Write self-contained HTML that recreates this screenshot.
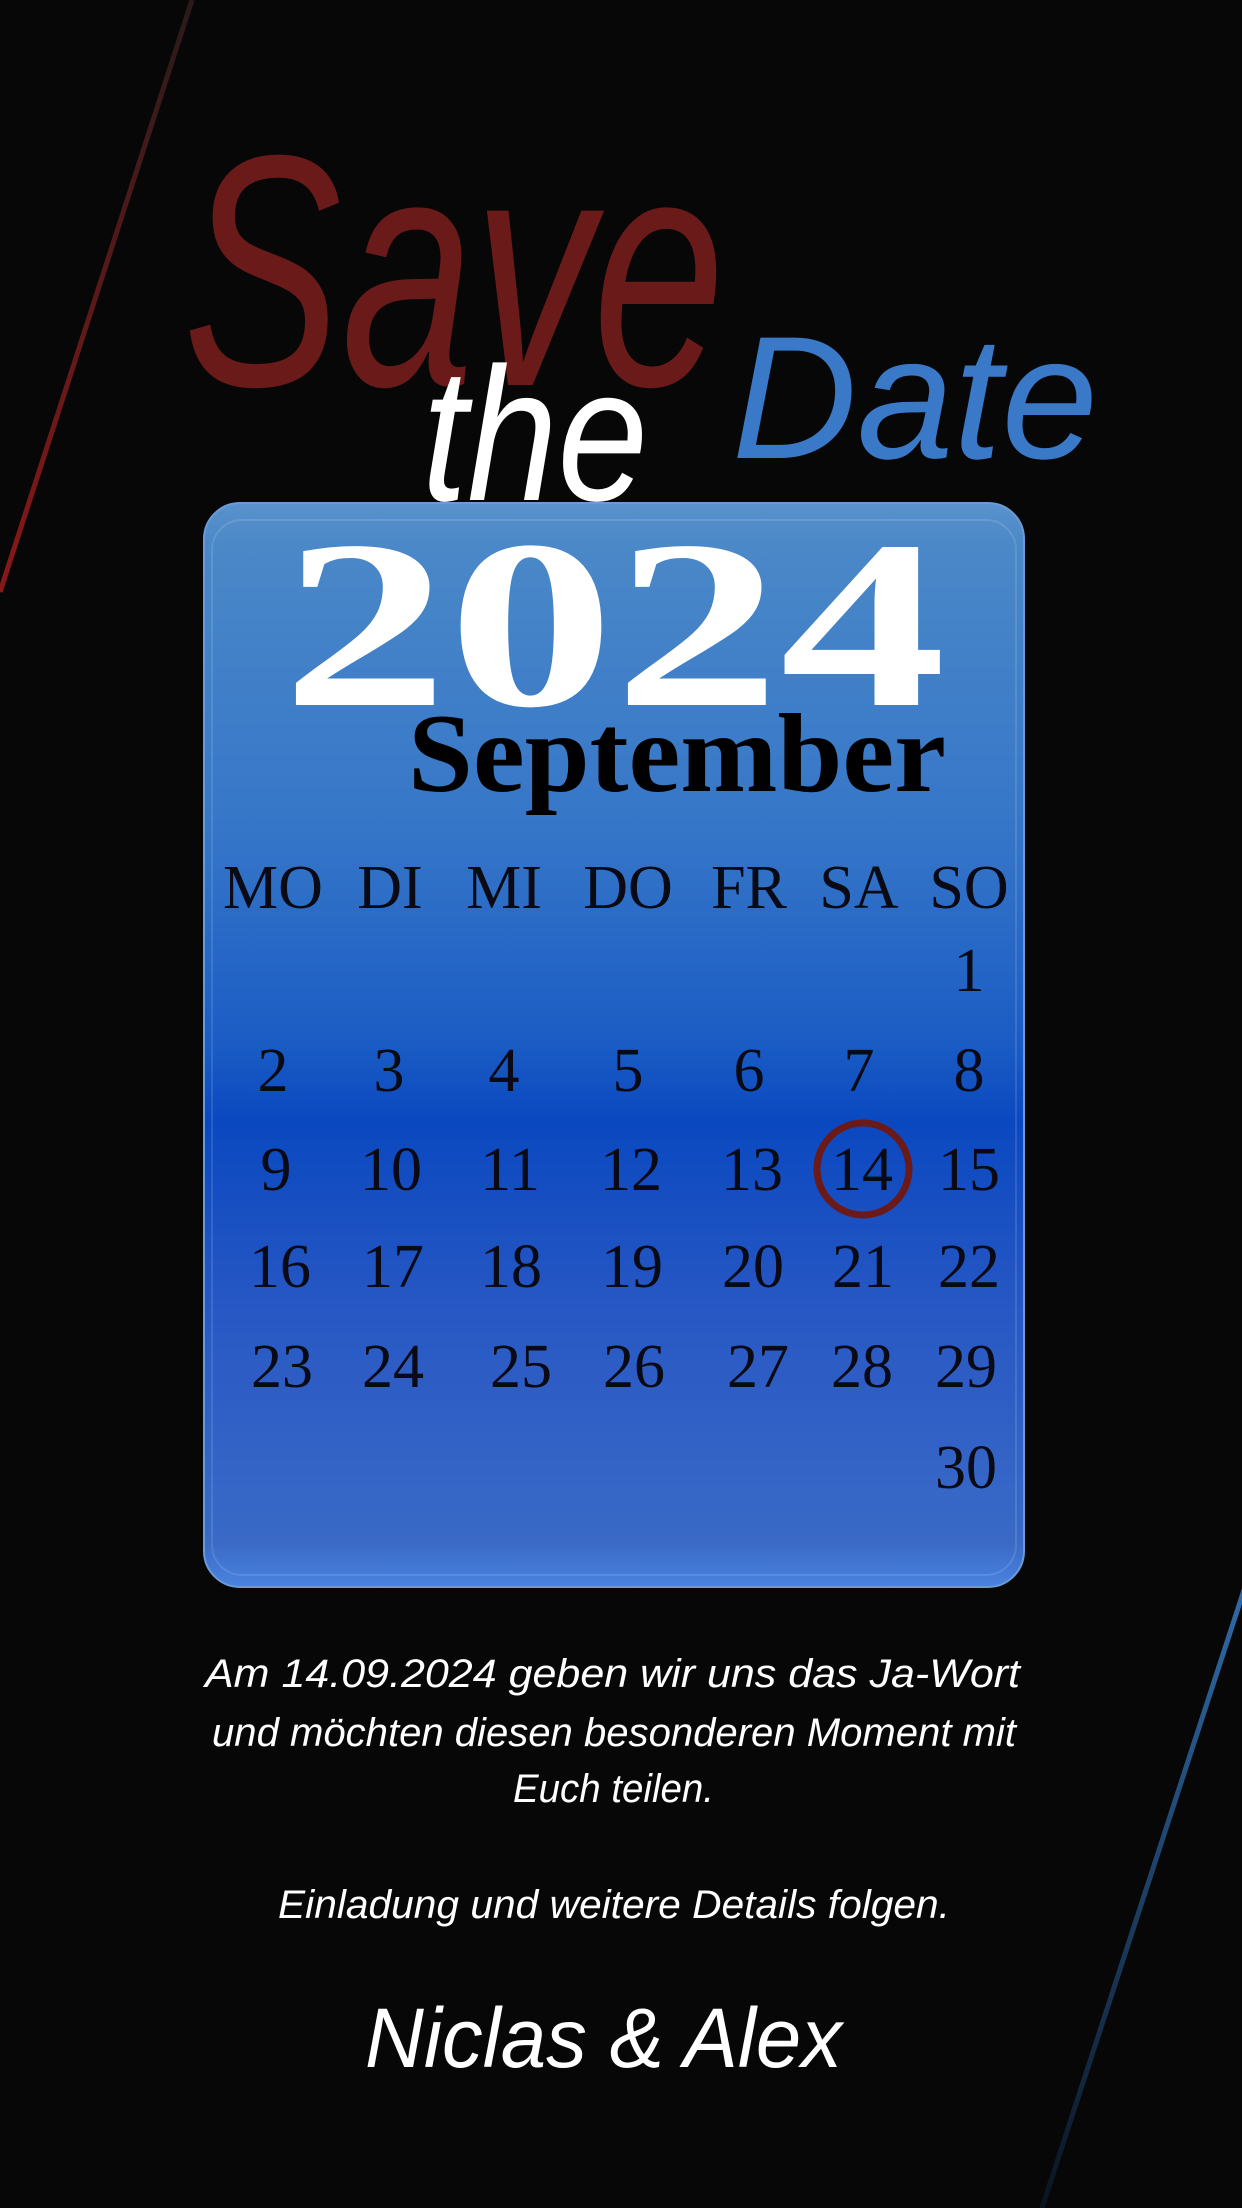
<!DOCTYPE html>
<html><head><meta charset="utf-8"><style>
html,body{margin:0;padding:0;background:#070707;}
svg{display:block}
</style></head><body>
<svg width="1242" height="2208" viewBox="0 0 1242 2208" xmlns="http://www.w3.org/2000/svg">
<defs>
<linearGradient id="red" x1="0" y1="0" x2="0" y2="1"><stop offset="0" stop-color="#2a1a1a"/><stop offset="1" stop-color="#8a1818"/></linearGradient>
<linearGradient id="blu" x1="0" y1="0" x2="0" y2="1"><stop offset="0" stop-color="#2f6aa8"/><stop offset="1" stop-color="#0a1420"/></linearGradient>
<linearGradient id="card" x1="0" y1="0" x2="0" y2="1">
<stop offset="0" stop-color="#5a92cc"/><stop offset="0.04" stop-color="#4a88c8"/>
<stop offset="0.3" stop-color="#3676c8"/><stop offset="0.5" stop-color="#1a5cc4"/>
<stop offset="0.57" stop-color="#0a48c0"/><stop offset="0.75" stop-color="#2858c4"/>
<stop offset="0.96" stop-color="#3a6ac6"/><stop offset="1" stop-color="#4a84e0"/></linearGradient>
</defs>
<rect width="1242" height="2208" fill="#070707"/>
<line x1="192" y1="0" x2="0" y2="592" stroke="url(#red)" stroke-width="5"/>
<line x1="1244" y1="1590" x2="1042" y2="2208" stroke="url(#blu)" stroke-width="5"/>

<rect x="204" y="503" width="820" height="1084" rx="36" fill="url(#card)" stroke="#6a9ad8" stroke-width="2"/>
<rect x="212" y="520" width="804" height="1055" rx="30" fill="none" stroke="rgba(255,255,255,0.12)" stroke-width="2"/>

<g font-family="Liberation Sans, sans-serif" font-style="italic">
<text x="183" y="385" font-size="330" fill="#6b1a1a" textLength="542" lengthAdjust="spacingAndGlyphs">Save</text>
<text x="732" y="458" font-size="175" fill="#3a78c8" textLength="366" lengthAdjust="spacingAndGlyphs">Date</text>
<text x="422" y="500" font-size="190" fill="#ffffff" textLength="226" lengthAdjust="spacingAndGlyphs">the</text>
</g>

<g font-family="Liberation Serif, serif" font-weight="bold">
<text x="282" y="705" font-size="240" fill="#fff" textLength="664" lengthAdjust="spacingAndGlyphs">2024</text>
<text x="408" y="791" font-size="112" fill="#000" textLength="538" lengthAdjust="spacingAndGlyphs">September</text>
</g>

<g font-family="Liberation Serif, serif" font-size="62" fill="#0a0a14" text-anchor="middle">
<text x="273" y="908">MO</text><text x="390" y="908">DI</text><text x="504" y="908">MI</text><text x="628" y="908">DO</text><text x="749" y="908">FR</text><text x="859" y="908">SA</text><text x="969" y="908">SO</text>
<text x="969" y="991">1</text>
<text x="273" y="1091">2</text><text x="389" y="1091">3</text><text x="504" y="1091">4</text><text x="628" y="1091">5</text><text x="749" y="1091">6</text><text x="859" y="1091">7</text><text x="969" y="1091">8</text>
<text x="276" y="1190">9</text><text x="391" y="1190">10</text><text x="510" y="1190">11</text><text x="631" y="1190">12</text><text x="752" y="1190">13</text><text x="862" y="1190">14</text><text x="969" y="1190">15</text>
<text x="280" y="1287">16</text><text x="393" y="1287">17</text><text x="511" y="1287">18</text><text x="632" y="1287">19</text><text x="753" y="1287">20</text><text x="863" y="1287">21</text><text x="969" y="1287">22</text>
<text x="282" y="1387">23</text><text x="393" y="1387">24</text><text x="521" y="1387">25</text><text x="634" y="1387">26</text><text x="758" y="1387">27</text><text x="862" y="1387">28</text><text x="966" y="1387">29</text>
<text x="966" y="1488">30</text>
</g>
<circle cx="863" cy="1169" r="46" fill="none" stroke="#6b1a1a" stroke-width="7"/>

<g font-family="Liberation Sans, sans-serif" font-style="italic" fill="#fff">
<text x="205" y="1687" font-size="40" textLength="815" lengthAdjust="spacingAndGlyphs">Am 14.09.2024 geben wir uns das Ja-Wort</text>
<text x="212" y="1746" font-size="40" textLength="804" lengthAdjust="spacingAndGlyphs">und möchten diesen besonderen Moment mit</text>
<text x="513" y="1802" font-size="40" textLength="201" lengthAdjust="spacingAndGlyphs">Euch teilen.</text>
<text x="278" y="1918" font-size="40" textLength="672" lengthAdjust="spacingAndGlyphs">Einladung und weitere Details folgen.</text>
<text x="365" y="2067" font-size="84" textLength="477" lengthAdjust="spacingAndGlyphs">Niclas &amp; Alex</text>
</g>
</svg>
</body></html>
